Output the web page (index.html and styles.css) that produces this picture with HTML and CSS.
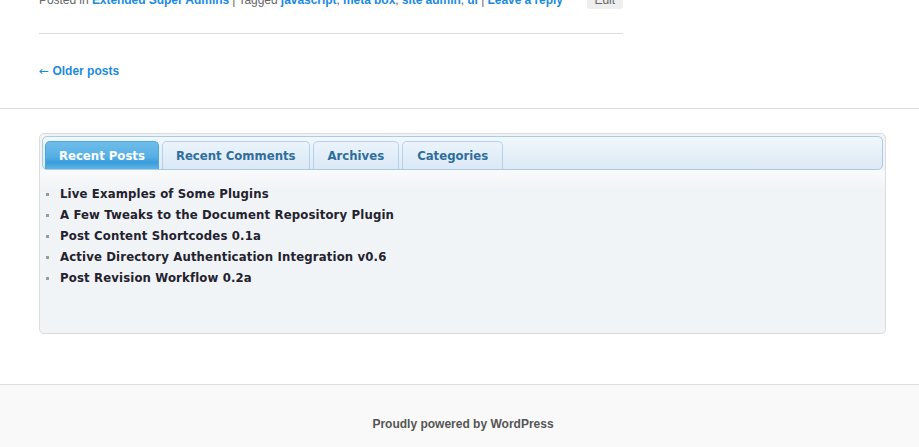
FILE: index.html
```html
<!DOCTYPE html>
<html>
<head>
<meta charset="utf-8">
<link rel="stylesheet" href="styles.css">
</head>
<body>
<div class="page">
  <div class="content">
    <footer class="entry-meta">
      <span class="meta-text">Posted in <a href="#">Extended Super Admins</a> | Tagged <a href="#">javascript</a>, <a href="#">meta box</a>, <a href="#">site admin</a>, <a href="#">ui</a> | <a href="#">Leave a reply</a></span>
      <a class="edit-link" href="#">Edit</a>
    </footer>
    <nav class="nav-below"><a href="#"><span class="arrow">&larr;</span> Older posts</a></nav>
  </div>
  <div class="supplementary">
    <div class="tabs">
      <ul class="tabnav">
        <li class="tab active">Recent Posts</li>
        <li class="tab">Recent Comments</li>
        <li class="tab wide">Archives</li>
        <li class="tab wide">Categories</li>
      </ul>
      <div class="panel">
        <ul class="posts">
          <li>Live Examples of Some Plugins</li>
          <li>A Few Tweaks to the Document Repository Plugin</li>
          <li>Post Content Shortcodes 0.1a</li>
          <li>Active Directory Authentication Integration v0.6</li>
          <li>Post Revision Workflow 0.2a</li>
        </ul>
      </div>
    </div>
  </div>
  <footer class="site-footer">Proudly powered by WordPress</footer>
</div>
</body>
</html>
```
FILE: styles.css
```css
html, body {
  margin: 0;
  padding: 0;
  background: #fff;
}
body {
  font-family: "Liberation Sans", Arial, sans-serif;
  font-size: 12px;
  color: #373737;
  overflow: hidden;
}
a {
  text-decoration: none;
  color: #1b8be0;
  font-weight: bold;
}
.content {
  padding-left: 39px;
  width: 584px;
}
.entry-meta {
  display: flex;
  justify-content: space-between;
  align-items: flex-start;
  margin-top: -9px;
  line-height: 18px;
  color: #666;
  padding-bottom: 24px;
  border-bottom: 1px solid #ddd;
  letter-spacing: -0.05px;
}
.edit-link {
  background: #eee;
  color: #666;
  font-weight: normal;
  border-radius: 3px;
  padding: 0 8px;
  line-height: 18px;
}
.nav-below {
  padding: 28px 0;
  line-height: 18px;
}
.arrow {
  font-family: "DejaVu Sans", sans-serif;
  font-weight: normal;
  font-size: 12px;
}
.supplementary {
  border-top: 1px solid #ddd;
  padding: 24px 33px 50px 39px;
}
.tabs {
  border: 1px solid #dcdcdc;
  border-radius: 5px;
  background: #f1f4f7;
  padding: 2px 2px 0 2px;
  box-sizing: border-box;
  height: 201px;
}
.tabnav {
  list-style: none;
  margin: 0;
  padding: 4px 2px 0 2px;
  display: flex;
  gap: 3px;
  border: 1px solid #aacbe6;
  border-radius: 5px;
  background: linear-gradient(#f1f7fb, #dce9f5);
}
.tab {
  font-family: "DejaVu Sans Condensed", "DejaVu Sans", sans-serif;
  font-weight: bold;
  font-size: 13px;
  line-height: 27px;
  padding: 0 13px;
  color: #2e6e9e;
  border: 1px solid #b6d2ea;
  border-bottom: none;
  border-radius: 5px 5px 0 0;
  background: linear-gradient(#eaf3fb, #dbe9f6);
}
.tab.wide {
  padding: 0 14px;
}
.tab.active {
  color: #fff;
  border-color: #4ea6dc;
  background: linear-gradient(#6fbdea, #55afe4 55%, #3a9ddb 75%, #5cb4e6);
}
.panel {
  margin: 0 -2px;
  background: linear-gradient(#f9fafc, #f1f4f7 20px);
}
.posts {
  list-style: none;
  margin: 0;
  padding: 13px 0 0 6px;
}
.posts li {
  font-family: "DejaVu Sans Condensed", "DejaVu Sans", sans-serif;
  font-weight: bold;
  font-size: 13px;
  line-height: 21px;
  letter-spacing: 0.15px;
  color: #23222e;
  display: flex;
  align-items: center;
}
.posts li::before {
  content: "";
  width: 3px;
  height: 3px;
  background: #9a9a9a;
  margin-right: 11px;
  margin-top: 2px;
  flex: none;
}
.site-footer {
  border-top: 1px solid #ddd;
  background: #f9f9f9;
  color: #555;
  font-weight: bold;
  text-align: center;
  padding: 30px 0 14px 7px;
  line-height: 18px;
}
```
